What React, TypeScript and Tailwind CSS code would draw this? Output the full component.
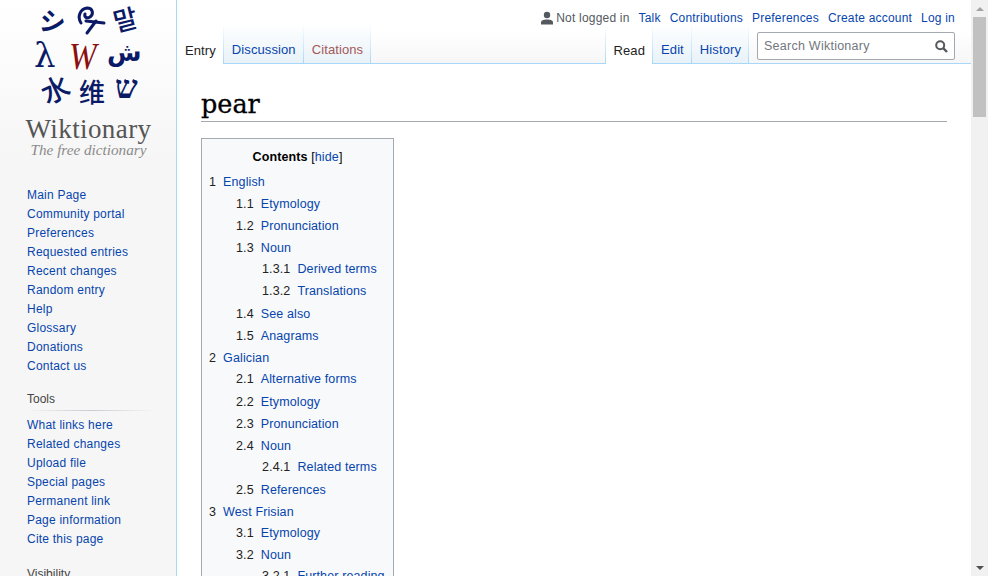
import React from 'react';

const navMain = ['Main Page', 'Community portal', 'Preferences', 'Requested entries', 'Recent changes', 'Random entry', 'Help', 'Glossary', 'Donations', 'Contact us'];
const navTools = ['What links here', 'Related changes', 'Upload file', 'Special pages', 'Permanent link', 'Page information', 'Cite this page'];

const toc: [number, string, string, string][] = [
  [1, '1', 'English', 'mt-0'],
  [2, '1.1', 'Etymology', 'mt-0'],
  [2, '1.2', 'Pronunciation', 'mt-0'],
  [2, '1.3', 'Noun', 'mt-0'],
  [3, '1.3.1', 'Derived terms', '-mt-px'],
  [3, '1.3.2', 'Translations', 'mt-0'],
  [2, '1.4', 'See also', 'mt-px'],
  [2, '1.5', 'Anagrams', 'mt-0'],
  [1, '2', 'Galician', 'mt-0'],
  [2, '2.1', 'Alternative forms', '-mt-px'],
  [2, '2.2', 'Etymology', 'mt-px'],
  [2, '2.3', 'Pronunciation', 'mt-0'],
  [2, '2.4', 'Noun', 'mt-0'],
  [3, '2.4.1', 'Related terms', '-mt-px'],
  [2, '2.5', 'References', 'mt-px'],
  [1, '3', 'West Frisian', 'mt-0'],
  [2, '3.1', 'Etymology', '-mt-px'],
  [2, '3.2', 'Noun', 'mt-0'],
  [3, '3.2.1', 'Further reading', '-mt-px'],
];

const Logo = () => (
  <svg width="176" height="160" viewBox="0 0 176 160" className="block">
    <g fill="#0b1a66" fontWeight="700" fontFamily="'Noto Sans CJK JP', 'DejaVu Sans', sans-serif">
      <text fontSize="26" transform="translate(38 29) rotate(10)">シ</text>
      <text fontSize="26" fontWeight="500" fontFamily="'Noto Sans CJK KR', sans-serif" transform="translate(116 32) rotate(-14)">말</text>
      <text fontSize="34" fontWeight="400" fontFamily="'DejaVu Serif', serif" transform="translate(34 67)">λ</text>
      <text fontSize="25" fontFamily="'DejaVu Sans', sans-serif" transform="translate(107 61)">ش</text>
      <text fontSize="28" fontWeight="500" transform="translate(47 105) rotate(-25)">水</text>
      <text fontSize="26" fontWeight="500" transform="translate(79 102)">维</text>
      <text fontSize="32" fontFamily="'Liberation Serif', serif" transform="translate(115 98)">ש</text>
    </g>
    {/* curled mark at the top of the logo */}
    <g fill="none" stroke="#0b1a66" strokeWidth="3" strokeLinecap="round">
      <path d="M81 23 C77 17 80 9 87 8 C93 8 94 14 90 17 C87 19 84 17 85 14" />
      <path d="M86 21 L104 23" />
      <path d="M96 21 L87 33" />
    </g>
    <text fontSize="39" fill="#8b0f0f" fontFamily="'Liberation Serif', serif" fontStyle="italic" transform="translate(69 69) scale(0.85 1)">W</text>
    <text x="88.5" y="138" textAnchor="middle" fontSize="27" fill="#555" fontFamily="'Liberation Serif', serif" letterSpacing="0.4">Wiktionary</text>
    <text x="88.5" y="155" textAnchor="middle" fontSize="15.2" fill="#8a8a8a" fontStyle="italic" fontFamily="'Liberation Serif', serif">The free dictionary</text>
  </svg>
);

const Tab = ({ label, active, red }: { label: string; active?: boolean; red?: boolean }) => (
  <div
    className={
      'flex h-10 items-end pl-2 pr-[7px] pb-[4px] text-[13px] tracking-[0.1px] ' +
      (active
        ? 'bg-white text-[#222]'
        : 'bg-gradient-to-b from-white to-[#e8f2f8] border-b border-b-[#a7d7f9] ' + (red ? 'text-[#a55858]' : 'text-[#0645ad]'))
    }
  >
    {label}
  </div>
);

const Sep = () => <div className="h-10 w-px bg-gradient-to-b from-white to-[#a7d7f9]" />;

export default function App() {
  return (
    <div className="flex h-[576px] w-[988px] overflow-hidden bg-white text-[12.5px] font-['Liberation_Sans',Arial,sans-serif]">
      {/* sidebar */}
      <aside className="w-[177px] shrink-0 border-r border-[#a7d7f9] bg-gradient-to-b from-white to-[#f6f6f6] to-[160px]">
        <Logo />
        <ul className="mt-[26px] pl-[27px] text-[#0645ad]">
          {navMain.map((n) => (
            <li key={n} className="h-[19px] text-[12px] leading-[19px] tracking-[0.22px]">{n}</li>
          ))}
        </ul>
        <div className="mt-[14px] pl-[27px] text-[12px] leading-[19px] text-[#444]">Tools</div>
        <div className="ml-[26px] mt-px h-px w-[130px] bg-gradient-to-r from-white/0 via-[#c8ccd1] to-white/0" />
        <ul className="mt-[5px] pl-[27px] text-[#0645ad]">
          {navTools.map((n) => (
            <li key={n} className="h-[19px] text-[12px] leading-[19px] tracking-[0.22px]">{n}</li>
          ))}
        </ul>
        <div className="mt-[16px] pl-[27px] text-[12px] leading-[19px] text-[#444]">Visibility</div>
      </aside>

      {/* main */}
      <main className="min-w-0 flex-1">
        <div className="relative h-16 bg-gradient-to-b from-white from-[50%] to-[#f6f6f6]">
          <div className="flex h-6 items-center justify-end gap-[9px] pr-4 pt-[12px] text-[12px] tracking-[0.2px] text-[#0645ad]">
            <span className="flex items-center gap-[3px] text-[#54595d]">
              <svg width="12" height="14" viewBox="0 0 12 14" fill="#54595d">
                <circle cx="6" cy="4" r="3.2" />
                <path d="M0 13.5 V11.5 C0 9.3 3 8.5 6 8.5 S12 9.3 12 11.5 V13.5 Z" />
              </svg>
              Not logged in
            </span>
            <span>Talk</span>
            <span>Contributions</span>
            <span>Preferences</span>
            <span>Create account</span>
            <span>Log in</span>
          </div>
          <div className="flex items-end">
            <Tab label="Entry" active />
            <Sep />
            <Tab label="Discussion" />
            <Sep />
            <Tab label="Citations" red />
            <Sep />
            <div className="h-10 flex-1 border-b border-[#a7d7f9]" />
            <Sep />
            <Tab label="Read" active />
            <Sep />
            <Tab label="Edit" />
            <Sep />
            <Tab label="History" />
            <Sep />
            <div className="flex h-10 w-[222px] items-start border-b border-[#a7d7f9] pl-2 pt-2">
              <div className="flex h-7 w-[198px] items-center justify-between rounded-[2px] border border-[#a2a9b1] bg-white pl-[6px] pr-[6px] text-[12.5px] tracking-[0.25px] text-[#72777d]">
                <span>Search Wiktionary</span>
                <svg width="13" height="13" viewBox="0 0 13 13" fill="none" stroke="#54595d" strokeWidth="2">
                  <circle cx="5.2" cy="5.2" r="4" />
                  <path d="M8.2 8.2 L12 12" strokeWidth="2.4" />
                </svg>
              </div>
            </div>
          </div>
        </div>

        <div className="pl-6 pr-6">
          <h1 className="mt-[22px] h-[36px] border-b border-[#a2a9b1] font-['DejaVu_Serif',serif] text-[25.5px] leading-[36px] text-black [-webkit-text-stroke:0.3px_black]">pear</h1>
          <div className="mt-4 w-[193px] border border-[#a2a9b1] bg-[#f8f9fa] pl-[7px] pt-[7px] text-[12.5px] tracking-[0.12px]">
            <div className="mb-[3px] pr-[7px] text-center leading-[22px] text-black">
              <b>Contents</b> [<span className="text-[#0645ad]">hide</span>]
            </div>
            {toc.map(([level, num, label, shift]) => (
              <div
                key={num + label}
                className={
                  'flex h-[22px] items-center whitespace-nowrap ' +
                  shift + ' ' +
                  (level === 1 ? 'pl-0' : level === 2 ? 'pl-[27px]' : 'pl-[53px]')
                }
              >
                <span className="mr-[7px] text-[#222]">{num}</span>
                <span className="text-[#0645ad]">{label}</span>
              </div>
            ))}
          </div>
        </div>
      </main>

      {/* scrollbar */}
      <div className="flex w-[17px] shrink-0 flex-col items-center bg-[#f1f1f1]">
        <div className="flex h-[17px] w-full items-center justify-center">
          <div className="h-0 w-0 border-x-[4px] border-b-[4px] border-x-transparent border-b-[#a3a3a3]" />
        </div>
        <div className="h-[100px] w-[13px] bg-[#c1c1c1]" />
        <div className="flex-1" />
        <div className="flex h-[17px] w-full items-center justify-center">
          <div className="h-0 w-0 border-x-[4px] border-t-[4px] border-x-transparent border-t-[#505050]" />
        </div>
      </div>
    </div>
  );
}
